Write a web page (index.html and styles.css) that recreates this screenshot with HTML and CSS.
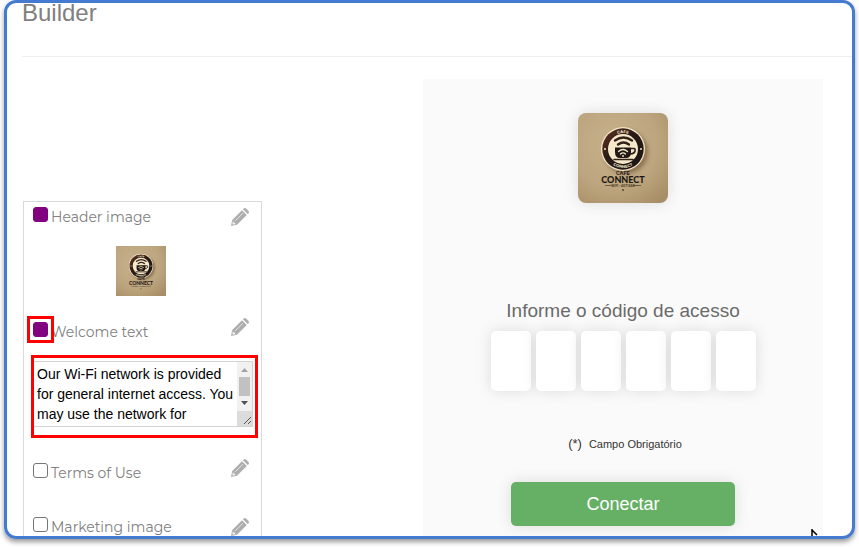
FILE: index.html
```html
<!DOCTYPE html>
<html lang="pt">
<head>
<meta charset="utf-8">
<title>Builder</title>
<link rel="stylesheet" href="styles.css">
</head>
<body>
<svg class="defs" aria-hidden="true">
  <defs>
    <radialGradient id="paper" cx="40%" cy="35%" r="80%">
      <stop offset="0" stop-color="#c7b18b"/>
      <stop offset="0.6" stop-color="#bda67f"/>
      <stop offset="1" stop-color="#a88e66"/>
    </radialGradient>
    <linearGradient id="ring" x1="0" y1="0" x2="1" y2="1">
      <stop offset="0" stop-color="#6b3422"/>
      <stop offset="0.4" stop-color="#2c1c17"/>
      <stop offset="1" stop-color="#191513"/>
    </linearGradient>
    <filter id="soft" x="-30%" y="-30%" width="160%" height="160%"><feGaussianBlur stdDeviation="2"/></filter>
    <path id="arc-top" d="M29 36a16 16 0 0 1 32 0"/>
    <path id="arc-bottom" d="M26 36a19 19 0 0 0 38 0"/>
    <symbol id="logo" viewBox="0 0 90 90">
      <rect width="90" height="90" fill="url(#paper)"/>
      <circle cx="48" cy="39" r="22" fill="#6d5031" opacity="0.6" filter="url(#soft)"/>
      <circle cx="45" cy="36" r="22" fill="#f3e6c6"/>
      <circle cx="45" cy="36" r="20.700" fill="url(#ring)"/>
      <circle cx="45" cy="36" r="15" fill="#f5e9c9"/>
      <text class="logo-ring"><textPath href="#arc-top" startOffset="50%">CAFE</textPath></text>
      <text class="logo-ring"><textPath href="#arc-bottom" startOffset="50%">CONNECT</textPath></text>
      <circle cx="27" cy="36" r="1" fill="#f3e6c6"/>
      <circle cx="63" cy="36" r="1" fill="#f3e6c6"/>
      <g fill="none" stroke="#33211a" stroke-width="2.400" stroke-linecap="round">
        <path d="M37 27.500q8.500-6 17 0"/>
        <path d="M40 31.500q5.500-4 11 0"/>
        <path d="M53 35.500h3q1.500 0 1 2.500t-4.500 3" stroke-width="1.600"/>
        <path d="M36 46.500h19" stroke-width="1.600"/>
      </g>
      <path d="M37 34.500h16v4.500q0 6-5 6h-6q-5 0-5-6z" fill="#211815"/>
      <g fill="none" stroke="#f5e9c9" stroke-width="1.300" stroke-linecap="round">
        <path d="M40.500 38.500q4.500-4 9 0"/>
        <path d="M42.500 41q2.500-2.200 5 0"/>
      </g>
      <circle cx="45" cy="43" r="0.900" fill="#f5e9c9"/>
      <text class="logo-small" x="45" y="62">CAFE</text>
      <text class="logo-name" x="45" y="70">CONNECT</text>
      <path d="M27 72.500h6M57 72.500h6" stroke="#4a3b2a" stroke-width="0.700"/>
      <text class="logo-tag" x="45" y="73.500">WIFI • ARTISAN</text>
      <circle cx="45" cy="77" r="0.900" fill="#4a3b2a"/>
    </symbol>
    <symbol id="pencil" viewBox="0 0 18 18">
      <path d="M0 18l1.200-6L11 2.200l4.800 4.800L6 16.800zM11.900 1.300l.7-.7q1.300-1.100 2.700.1l2 2q1.200 1.400.1 2.700l-.7.700z" fill="#aeaeae"/>
      <path d="M4.300 12.800l7.700-7.700" stroke="#e4e4e4" stroke-width="1"/>
      <path d="M1.900 13.200l2.900 2.900-2.600.6-.9-.9z" fill="#ededed"/>
    </symbol>
  </defs>
</svg>

<main class="frame">
  <h1 class="title">Builder</h1>
  <div class="workspace">
    <section class="options" aria-label="Components">
      <div class="option">
        <input type="checkbox" id="header-image" checked>
        <label for="header-image">Header image</label>
        <button class="edit" type="button" aria-label="Edit header image"><svg><use href="#pencil"/></svg></button>
      </div>
      <svg class="thumb" role="img" aria-label="Café Connect"><use href="#logo"/></svg>
      <div class="option option-raised">
        <span class="mark"><input type="checkbox" id="welcome" checked></span>
        <label for="welcome">Welcome text</label>
        <button class="edit" type="button" aria-label="Edit welcome text"><svg><use href="#pencil"/></svg></button>
      </div>
      <div class="message">
        <textarea aria-label="Welcome message" rows="3">Our Wi-Fi network is provided for general internet access. You may use the network for</textarea>
        <svg class="scrollbar" viewBox="0 0 15 64" aria-hidden="true">
          <path d="M0 0h15v49H0z" fill="#f1f1f1"/>
          <path d="M0 49h15v15H0z" fill="#dcdcdc"/>
          <path d="M2 15h11v19H2z" fill="#c1c1c1"/>
          <path d="M4 10l3.500-4 3.500 4z" fill="#a3a3a3"/>
          <path d="M4 39l3.500 4 3.500-4z" fill="#505050"/>
          <path d="M7 62l7-7M11 62l3-3" stroke="#555" fill="none"/>
        </svg>
      </div>
      <div class="option option-raised">
        <input type="checkbox" id="terms">
        <label for="terms">Terms of Use</label>
        <button class="edit" type="button" aria-label="Edit terms of use"><svg><use href="#pencil"/></svg></button>
      </div>
      <div class="option option-last">
        <input type="checkbox" id="marketing">
        <label for="marketing">Marketing image</label>
        <button class="edit" type="button" aria-label="Edit marketing image"><svg><use href="#pencil"/></svg></button>
      </div>
    </section>

    <form class="preview">
      <svg class="brand" role="img" aria-label="Café Connect"><use href="#logo"/></svg>
      <h2 id="code-title">Informe o código de acesso</h2>
      <div class="code" role="group" aria-labelledby="code-title">
        <input type="text" maxlength="1" aria-label="1">
        <input type="text" maxlength="1" aria-label="2">
        <input type="text" maxlength="1" aria-label="3">
        <input type="text" maxlength="1" aria-label="4">
        <input type="text" maxlength="1" aria-label="5">
        <input type="text" maxlength="1" aria-label="6">
      </div>
      <p class="required"><span class="star">(*)</span><span>Campo Obrigatório</span></p>
      <button class="connect" type="button">Conectar</button>
    </form>
  </div>
  <svg class="cursor" viewBox="0 0 8 10" aria-hidden="true"><path d="M1 0v10M1 1l5 5" stroke="#000" stroke-width="1.500" fill="none"/></svg>
</main>
</body>
</html>
```
FILE: styles.css
```css
* {
  box-sizing: border-box;
}

body {
  min-height: 100vh;
  margin: 0;
  padding: 0 4px 8px;
  background: #fff;
  font-family: "Liberation Sans", Arial, sans-serif;
}

.defs {
  position: absolute;
  width: 0;
  height: 0;
}

.frame {
  position: relative;
  height: calc(100vh - 8px);
  border: 3px solid #447bd0;
  border-radius: 12px;
  box-shadow: 0 3px 5px rgba(0, 0, 0, 0.4);
  overflow: hidden;
}

.title {
  margin: 0 0 22px 15px;
  padding-bottom: 33px;
  border-bottom: 1px solid #eee;
  color: #808080;
  font-size: 24px;
  font-weight: 400;
  line-height: 20px;
}

.workspace {
  display: flex;
  justify-content: space-between;
  padding: 0 29px 0 16px;
}

.options {
  width: 239px;
  margin-top: 122px;
  padding: 0 12px 0 9px;
  border: 1px solid #d9d9d9;
}

.option {
  display: flex;
  align-items: flex-start;
  gap: 3px;
  padding-top: 5px;
}

.option input {
  display: block;
  appearance: none;
  width: 15px;
  height: 15px;
  margin: 0;
  border: 1px solid #767676;
  border-radius: 3px;
  background: #fff;
}

.option input:checked {
  border-color: #800080;
  background: #800080;
}

.option label {
  color: #808080;
  font-family: Montserrat, Inter, sans-serif;
  font-size: 14px;
  font-weight: 400;
  line-height: 20px;
}

.edit {
  width: 18px;
  height: 18px;
  margin: 1px 0 0 auto;
  padding: 0;
  border: 0;
  background: none;
}

.edit svg {
  display: block;
  width: 18px;
  height: 18px;
}

.option-raised .edit {
  margin-top: -4px;
}

.option-last {
  padding: 34px 0 24px;
}

.thumb {
  display: block;
  width: 50px;
  height: 50px;
  margin: 19px 0 21px 83px;
}

.mark {
  position: relative;
}

.mark::after {
  content: "";
  position: absolute;
  inset: -6px;
  border: 3px solid #f00;
}

.message {
  position: relative;
  margin: 19px -4px 31px 0;
}

.message::after {
  content: "";
  position: absolute;
  inset: -6px -5px -11px -2px;
  border: 3px solid #f00;
}

.message textarea {
  display: block;
  width: 100%;
  height: 66px;
  padding: 2px 15px 2px 3px;
  border: 1px solid #d3d3d3;
  background: #fff;
  color: #000;
  font: 14px/20px "Liberation Sans", Arial, sans-serif;
  overflow: hidden;
  resize: none;
}

.scrollbar {
  position: absolute;
  top: 1px;
  right: 1px;
  width: 15px;
  height: 64px;
}

.preview {
  display: flex;
  flex-direction: column;
  align-items: center;
  width: 400px;
  padding: 34px 20px;
  background: #fafafa;
}

.brand {
  width: 90px;
  height: 90px;
  border-radius: 8px;
  box-shadow: 0 0 15px rgba(0, 0, 0, 0.12);
}

.preview h2 {
  margin: 96px 0 8px;
  color: #6b6b6b;
  font-size: 19px;
  font-weight: 400;
  line-height: 24px;
}

.code {
  display: flex;
  gap: 5px;
}

.code input {
  width: 40px;
  height: 60px;
  padding: 0;
  border: 0;
  border-radius: 5px;
  background: #fff;
  box-shadow: 0 0 15px rgba(0, 0, 0, 0.12);
  text-align: center;
}

.required {
  display: flex;
  align-items: baseline;
  gap: 7px;
  margin: 43px 0 28px;
  padding-left: 4px;
  color: #333;
  font-size: 11px;
  line-height: 20px;
}

.star {
  font-size: 13px;
}

.connect {
  width: 224px;
  height: 44px;
  border: 0;
  border-radius: 5px;
  background: #66b066;
  box-shadow: 0 0 15px rgba(0, 0, 0, 0.12);
  color: #fff;
  font: 18px/24px "Liberation Sans", Arial, sans-serif;
}

.cursor {
  position: absolute;
  right: 33px;
  bottom: -3px;
  width: 8px;
  height: 10px;
}

.logo-ring,
.logo-small,
.logo-name,
.logo-tag {
  font-family: Montserrat, Lato, sans-serif;
  font-weight: 700;
  text-anchor: middle;
}

.logo-ring {
  fill: #f3e6c6;
  font-size: 4px;
}

.logo-small {
  fill: #2b211a;
  font-size: 5px;
}

.logo-name {
  fill: #1d1713;
  font-family: Lato, sans-serif;
  font-size: 9px;
  font-weight: 900;
}

.logo-tag {
  fill: #4a3b2a;
  font-size: 3px;
}
```
